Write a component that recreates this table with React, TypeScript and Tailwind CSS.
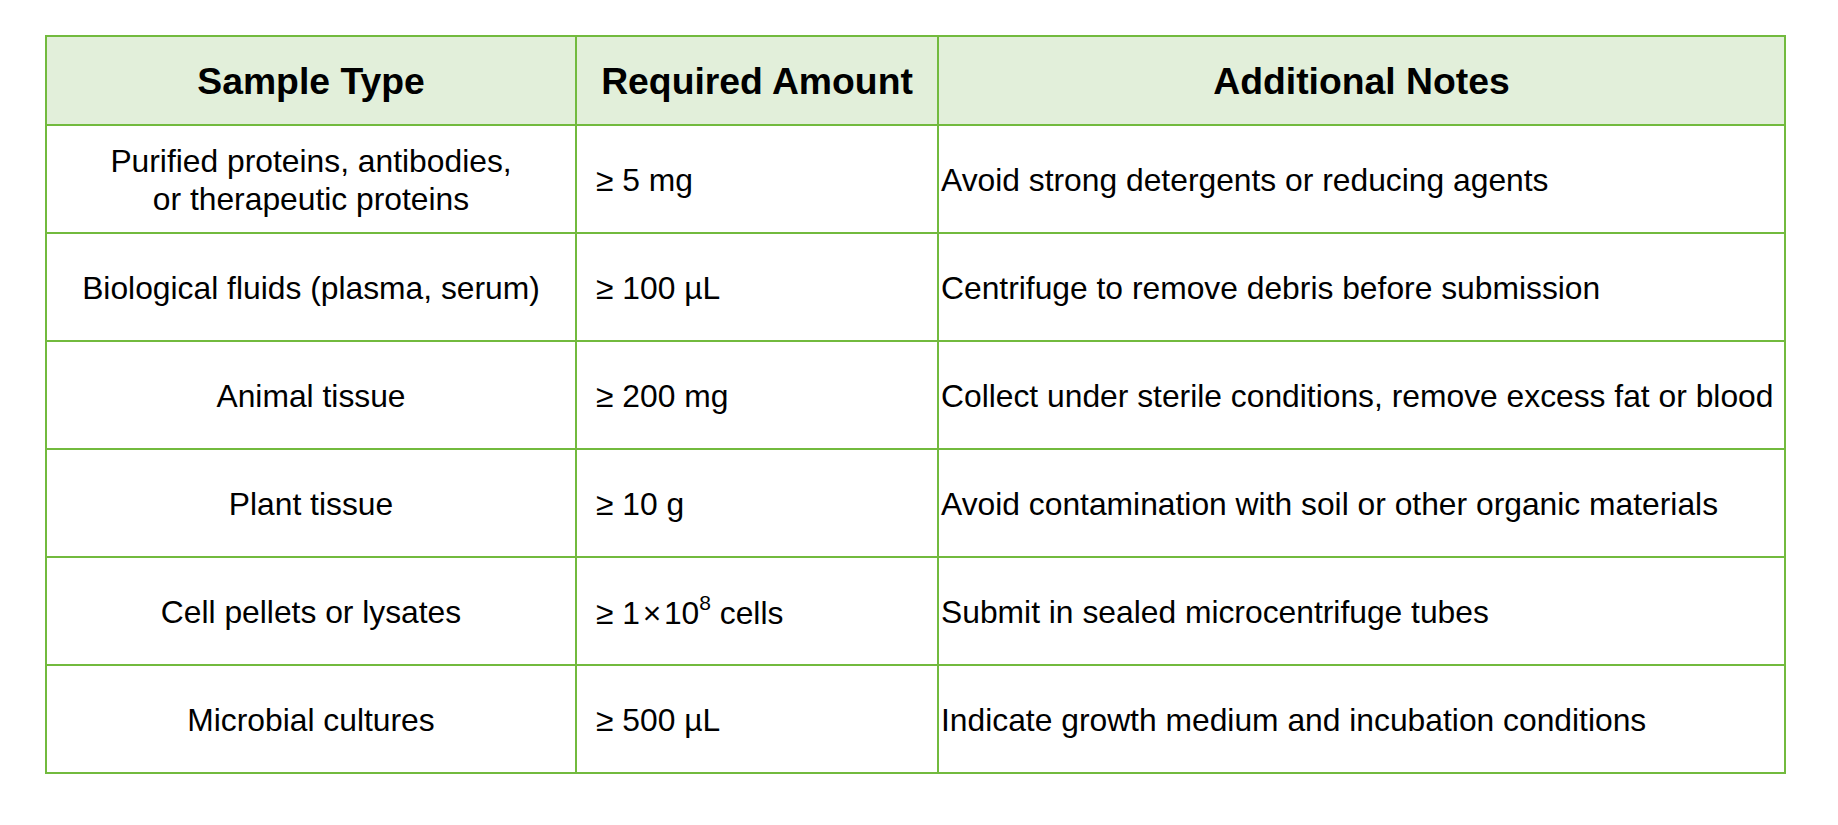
import React from "react";

const rows: { type: React.ReactNode; amount: React.ReactNode; notes: string }[] = [
  {
    type: (
      <>
        Purified proteins, antibodies,
        <br />
        or therapeutic proteins
      </>
    ),
    amount: "≥ 5 mg",
    notes: "Avoid strong detergents or reducing agents",
  },
  {
    type: "Biological fluids (plasma, serum)",
    amount: "≥ 100 µL",
    notes: "Centrifuge to remove debris before submission",
  },
  {
    type: "Animal tissue",
    amount: "≥ 200 mg",
    notes: "Collect under sterile conditions, remove excess fat or blood",
  },
  {
    type: "Plant tissue",
    amount: "≥ 10 g",
    notes: "Avoid contamination with soil or other organic materials",
  },
  {
    type: "Cell pellets or lysates",
    amount: (
      <>
        ≥ 1{"\u200A"}×{"\u200A"}10
        <sup className="relative top-[-2px] align-super text-[21px] leading-none">8</sup> cells
      </>
    ),
    notes: "Submit in sealed microcentrifuge tubes",
  },
  {
    type: "Microbial cultures",
    amount: "≥ 500 µL",
    notes: "Indicate growth medium and incubation conditions",
  },
];

export default function App() {
  return (
    <div className="min-h-[825px] bg-white pt-[35px] pl-[45px] font-['Liberation_Sans',Arial,sans-serif] text-black">
      <div className="grid w-fit grid-cols-[530px_362px_847px] border-l-2 border-t-2 border-[#72ba3e]">
        <div className="flex h-[89px] items-center justify-center border-r-2 border-b-2 border-[#72ba3e] bg-[#e2efda] pt-[2px] text-[37.33px] font-bold">
          Sample Type
        </div>
        <div className="flex h-[89px] items-center justify-center border-r-2 border-b-2 border-[#72ba3e] bg-[#e2efda] pt-[2px] text-[37.33px] font-bold">
          Required Amount
        </div>
        <div className="flex h-[89px] items-center justify-center border-r-2 border-b-2 border-[#72ba3e] bg-[#e2efda] pt-[2px] text-[37.33px] font-bold">
          Additional Notes
        </div>
        {rows.map((r, i) => (
          <React.Fragment key={i}>
            <div className="flex h-[108px] items-center justify-center border-r-2 border-b-2 border-[#72ba3e] pt-[3px] text-center text-[31.8px] leading-[1.17]">
              <div>{r.type}</div>
            </div>
            <div className="flex h-[108px] items-center border-r-2 border-b-2 border-[#72ba3e] pt-[3px] pl-[19px] text-[31.8px] leading-[1.17]">
              <div>{r.amount}</div>
            </div>
            <div className="flex h-[108px] items-center border-r-2 border-b-2 border-[#72ba3e] pt-[3px] pl-[2px] text-[31.8px] leading-[1.17] whitespace-nowrap">
              <div>{r.notes}</div>
            </div>
          </React.Fragment>
        ))}
      </div>
    </div>
  );
}
